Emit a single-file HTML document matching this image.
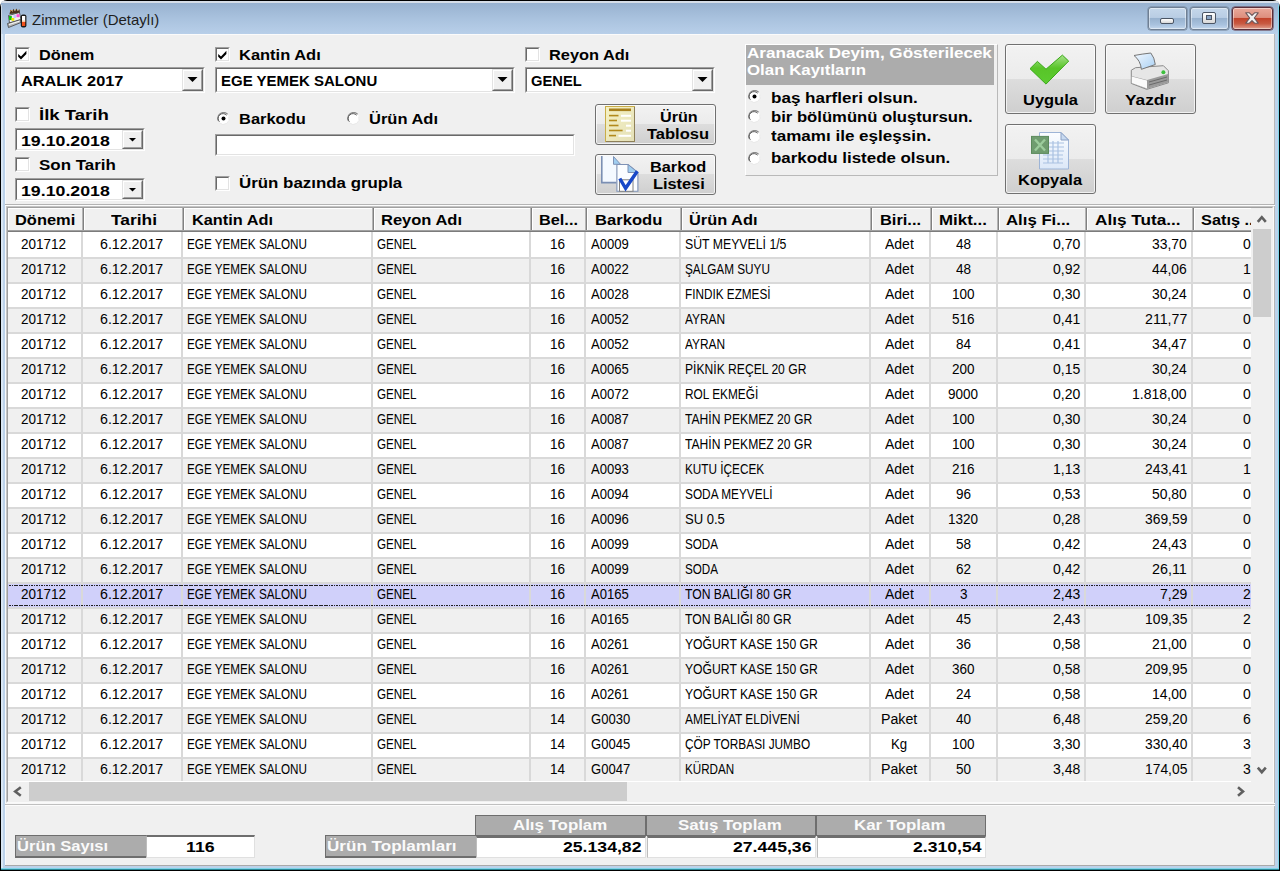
<!DOCTYPE html><html><head><meta charset="utf-8"><style>
html,body{margin:0;padding:0;background:#fff}
body{width:1280px;height:871px;position:relative;overflow:hidden;font-family:"Liberation Sans",sans-serif}
div,svg{position:absolute}
.t{white-space:pre;line-height:1;transform-origin:0 0}
.b{font-weight:bold}
</style></head><body>
<div style="left:0px;top:0px;width:1280px;height:871px;background:#000;border-radius:7px 7px 0 0"></div>
<div style="left:1px;top:1px;width:1278px;height:869px;background:#bcd2ea;border-radius:6px 6px 0 0"></div>
<div style="left:1px;top:1px;width:1278px;height:2px;background:#d6dee8;border-radius:6px 6px 0 0"></div>
<div style="left:1px;top:3px;width:1278px;height:31px;background:linear-gradient(#98b2d0,#a9c2de 50%,#b8cfe9)"></div>
<div style="left:1px;top:34px;width:2px;height:836px;background:#d9e6f3"></div>
<div style="left:1px;top:868px;width:1278px;height:1px;background:#7fd6ea"></div>
<div style="left:1px;top:869px;width:1278px;height:1px;background:#2c8796"></div>
<div style="left:1278px;top:5px;width:1px;height:864px;background:#7fd6ea"></div>
<div style="left:1px;top:5px;width:1px;height:29px;background:#cdd8e4"></div>
<div style="left:5px;top:34px;width:1270px;height:832px;background:#f0f0f0"></div>
<div style="left:5px;top:34px;width:1270px;height:1px;background:#fbfbfb"></div>
<div style="left:5px;top:34px;width:1px;height:832px;background:#f6f9fc"></div>
<div style="left:5px;top:865px;width:1270px;height:1px;background:#a9a9a9"></div>
<div style="left:1274px;top:34px;width:1px;height:832px;background:#b8b8b8"></div>
<svg style="left:6px;top:7px" width="24" height="24" viewBox="6 7 24 24">
<path d="M9.5 14 L10.5 9.5 L12 12 L13.5 8.8 L15 11.5 L16.5 8.6 L17.8 11.2 L19.5 9.2 L20 13 Z" fill="#4a3218"/>
<path d="M10.5 11.5 L11.5 10 L12.5 11.5 M14.5 10.5 L15.5 9.5 M17.5 10.5 L18.5 9.8" stroke="#e0a050" stroke-width="1"/>
<path d="M8.5 15.5 L19.5 12.5 L21 20 L9.5 23 Z" fill="#f0f0f0" stroke="#3a3a3a" stroke-width="0.8"/>
<rect x="9" y="16" width="2.8" height="4" fill="#10c010"/>
<rect x="11.5" y="18" width="2.8" height="2.8" fill="#f0e800"/>
<rect x="13.5" y="15" width="2.6" height="3" fill="#c8c8ff"/>
<rect x="16.5" y="14.2" width="3" height="3" fill="#ff50d0"/>
<path d="M7.5 23.5 L20.5 19.5 L21 22.5 L8.5 27.5 Z" fill="#b8b8b8" stroke="#404040" stroke-width="0.8"/>
<path d="M9 24.5 L19.5 21.2" stroke="#f8f8f8" stroke-width="1"/>
<rect x="20.8" y="14.5" width="5.6" height="13" rx="2" fill="#1a1a1a"/>
<rect x="22" y="16" width="3.2" height="5.5" fill="#fff"/>
<rect x="22" y="21.5" width="3.2" height="4.5" fill="#f0501c"/>
<rect x="22" y="20.5" width="3.2" height="1.5" fill="#f8c8a8"/>
</svg>
<div class="t" style="left:32.30px;top:12.30px;font-size:15px;transform:scaleX(0.9984);color:#1e1e1e;">Zimmetler (Detaylı)</div>
<div style="left:1148px;top:7px;width:39px;height:23px;box-sizing:border-box;border:1px solid #6f7f93;border-radius:3px;background:linear-gradient(#c5d7ea,#b9cde4 45%,#98b2cf 50%,#a9c2de 80%,#c4d8ee);box-shadow:inset 0 0 0 1px rgba(255,255,255,0.45),0 0 0 0.5px #6f7f93"></div>
<div style="left:1190px;top:7px;width:39px;height:23px;box-sizing:border-box;border:1px solid #6f7f93;border-radius:3px;background:linear-gradient(#c5d7ea,#b9cde4 45%,#98b2cf 50%,#a9c2de 80%,#c4d8ee);box-shadow:inset 0 0 0 1px rgba(255,255,255,0.45),0 0 0 0.5px #6f7f93"></div>
<div style="left:1232px;top:7px;width:41px;height:23px;box-sizing:border-box;border:1px solid #5b2f3a;border-radius:3px;background:linear-gradient(#eaa89a,#dd8f7e 45%,#c2432b 50%,#c85a42 75%,#e0a090);box-shadow:inset 0 0 0 1px rgba(255,255,255,0.45),0 0 0 0.5px #5b2f3a"></div>
<div style="left:1160px;top:18px;width:14px;height:6px;box-sizing:border-box;border:1px solid #4b5564;border-radius:2px;background:linear-gradient(#fff,#d8d8d8)"></div>
<div style="left:1202px;top:12px;width:14px;height:12px;box-sizing:border-box;border:1px solid #4b5564;border-radius:2px;background:linear-gradient(#fff,#d8d8d8)"></div>
<div style="left:1206px;top:15px;width:6px;height:5px;box-sizing:border-box;border:1px solid #4b5564;background:#8aa4c4"></div>
<svg style="left:1242px;top:10px" width="22" height="18" viewBox="0 0 22 18">
<path d="M3.8 2.8 L7.4 2.8 L10 5.4 L12.6 2.8 L16.2 2.8 L12.3 8 L16.2 13.2 L12.6 13.2 L10 10.6 L7.4 13.2 L3.8 13.2 L7.7 8 Z" fill="#f0f0f0" stroke="#6b5558" stroke-width="1.1" stroke-linejoin="round"/>
</svg>
<div style="left:15px;top:47px;width:15px;height:15px;box-sizing:border-box;background:#fff;border-style:solid;border-width:1px;border-color:#a0a0a0 #fff #fff #a0a0a0"></div>
<div style="left:16px;top:48px;width:13px;height:13px;box-sizing:border-box;border-style:solid;border-width:1px;border-color:#696969 #e3e3e3 #e3e3e3 #696969"></div>
<svg style="left:15px;top:47px" width="15" height="15" viewBox="0 0 15 15"><path d="M3.2 7 L6 9.6 L11.4 3.8 L11.4 6.9 L6 12.4 L3.2 9.8 Z" fill="#000"/></svg>
<div class="t b" style="left:39.20px;top:48.15px;font-size:14px;transform:scaleX(1.1667);color:#000;">Dönem</div>
<div style="left:215px;top:47px;width:15px;height:15px;box-sizing:border-box;background:#fff;border-style:solid;border-width:1px;border-color:#a0a0a0 #fff #fff #a0a0a0"></div>
<div style="left:216px;top:48px;width:13px;height:13px;box-sizing:border-box;border-style:solid;border-width:1px;border-color:#696969 #e3e3e3 #e3e3e3 #696969"></div>
<svg style="left:215px;top:47px" width="15" height="15" viewBox="0 0 15 15"><path d="M3.2 7 L6 9.6 L11.4 3.8 L11.4 6.9 L6 12.4 L3.2 9.8 Z" fill="#000"/></svg>
<div class="t b" style="left:239.00px;top:48.15px;font-size:14px;transform:scaleX(1.1763);color:#000;">Kantin Adı</div>
<div style="left:525px;top:47px;width:15px;height:15px;box-sizing:border-box;background:#fff;border-style:solid;border-width:1px;border-color:#a0a0a0 #fff #fff #a0a0a0"></div>
<div style="left:526px;top:48px;width:13px;height:13px;box-sizing:border-box;border-style:solid;border-width:1px;border-color:#696969 #e3e3e3 #e3e3e3 #696969"></div>
<div class="t b" style="left:549.00px;top:48.15px;font-size:14px;transform:scaleX(1.1703);color:#000;">Reyon Adı</div>
<div style="left:15px;top:67px;width:190px;height:26px;box-sizing:border-box;background:#fff;border-style:solid;border-width:1px;border-color:#a0a0a0 #fff #fff #a0a0a0"></div>
<div style="left:16px;top:68px;width:188px;height:24px;box-sizing:border-box;border-style:solid;border-width:1px;border-color:#696969 #e3e3e3 #e3e3e3 #696969"></div>
<div style="left:182px;top:69px;width:21px;height:22px;box-sizing:border-box;background:#f0f0f0;border-style:solid;border-width:1px;border-color:#e3e3e3 #696969 #696969 #e3e3e3"></div>
<div style="left:183px;top:70px;width:19px;height:20px;box-sizing:border-box;border-style:solid;border-width:1px;border-color:#fff #a0a0a0 #a0a0a0 #fff"></div>
<svg style="left:182px;top:69px" width="21" height="22"><path d="M5.5 8.0 L15.5 8.0 L10.5 13.0 Z" fill="#000"/></svg>
<div class="t b" style="left:20.50px;top:74.15px;font-size:14px;transform:scaleX(1.1638);color:#000;">ARALIK 2017</div>
<div style="left:215px;top:67px;width:300px;height:26px;box-sizing:border-box;background:#fff;border-style:solid;border-width:1px;border-color:#a0a0a0 #fff #fff #a0a0a0"></div>
<div style="left:216px;top:68px;width:298px;height:24px;box-sizing:border-box;border-style:solid;border-width:1px;border-color:#696969 #e3e3e3 #e3e3e3 #696969"></div>
<div style="left:492px;top:69px;width:21px;height:22px;box-sizing:border-box;background:#f0f0f0;border-style:solid;border-width:1px;border-color:#e3e3e3 #696969 #696969 #e3e3e3"></div>
<div style="left:493px;top:70px;width:19px;height:20px;box-sizing:border-box;border-style:solid;border-width:1px;border-color:#fff #a0a0a0 #a0a0a0 #fff"></div>
<svg style="left:492px;top:69px" width="21" height="22"><path d="M5.5 8.0 L15.5 8.0 L10.5 13.0 Z" fill="#000"/></svg>
<div class="t b" style="left:220.75px;top:74.15px;font-size:14px;transform:scaleX(1.0702);color:#000;">EGE YEMEK SALONU</div>
<div style="left:525px;top:67px;width:190px;height:26px;box-sizing:border-box;background:#fff;border-style:solid;border-width:1px;border-color:#a0a0a0 #fff #fff #a0a0a0"></div>
<div style="left:526px;top:68px;width:188px;height:24px;box-sizing:border-box;border-style:solid;border-width:1px;border-color:#696969 #e3e3e3 #e3e3e3 #696969"></div>
<div style="left:692px;top:69px;width:21px;height:22px;box-sizing:border-box;background:#f0f0f0;border-style:solid;border-width:1px;border-color:#e3e3e3 #696969 #696969 #e3e3e3"></div>
<div style="left:693px;top:70px;width:19px;height:20px;box-sizing:border-box;border-style:solid;border-width:1px;border-color:#fff #a0a0a0 #a0a0a0 #fff"></div>
<svg style="left:692px;top:69px" width="21" height="22"><path d="M5.5 8.0 L15.5 8.0 L10.5 13.0 Z" fill="#000"/></svg>
<div class="t b" style="left:530.60px;top:74.15px;font-size:14px;transform:scaleX(1.0508);color:#000;">GENEL</div>
<div style="left:15px;top:107px;width:15px;height:15px;box-sizing:border-box;background:#fff;border-style:solid;border-width:1px;border-color:#a0a0a0 #fff #fff #a0a0a0"></div>
<div style="left:16px;top:108px;width:13px;height:13px;box-sizing:border-box;border-style:solid;border-width:1px;border-color:#696969 #e3e3e3 #e3e3e3 #696969"></div>
<div class="t b" style="left:38.75px;top:108.15px;font-size:14px;transform:scaleX(1.3260);color:#000;">İlk Tarih</div>
<div style="left:15px;top:128px;width:130px;height:23px;box-sizing:border-box;background:#fff;border-style:solid;border-width:1px;border-color:#a0a0a0 #fff #fff #a0a0a0"></div>
<div style="left:16px;top:129px;width:128px;height:21px;box-sizing:border-box;border-style:solid;border-width:1px;border-color:#696969 #e3e3e3 #e3e3e3 #696969"></div>
<div style="left:122px;top:130px;width:21px;height:19px;box-sizing:border-box;background:#f0f0f0;border-style:solid;border-width:1px;border-color:#e3e3e3 #696969 #696969 #e3e3e3"></div>
<div style="left:123px;top:131px;width:19px;height:17px;box-sizing:border-box;border-style:solid;border-width:1px;border-color:#fff #a0a0a0 #a0a0a0 #fff"></div>
<svg style="left:122px;top:130px" width="21" height="19"><path d="M7.0 8.0 L14.0 8.0 L10.5 11.5 Z" fill="#000"/></svg>
<div class="t b" style="left:20.60px;top:134.15px;font-size:14px;transform:scaleX(1.2668);color:#000;">19.10.2018</div>
<div style="left:15px;top:157px;width:15px;height:15px;box-sizing:border-box;background:#fff;border-style:solid;border-width:1px;border-color:#a0a0a0 #fff #fff #a0a0a0"></div>
<div style="left:16px;top:158px;width:13px;height:13px;box-sizing:border-box;border-style:solid;border-width:1px;border-color:#696969 #e3e3e3 #e3e3e3 #696969"></div>
<div class="t b" style="left:38.75px;top:158.15px;font-size:14px;transform:scaleX(1.2102);color:#000;">Son Tarih</div>
<div style="left:15px;top:178px;width:130px;height:23px;box-sizing:border-box;background:#fff;border-style:solid;border-width:1px;border-color:#a0a0a0 #fff #fff #a0a0a0"></div>
<div style="left:16px;top:179px;width:128px;height:21px;box-sizing:border-box;border-style:solid;border-width:1px;border-color:#696969 #e3e3e3 #e3e3e3 #696969"></div>
<div style="left:122px;top:180px;width:21px;height:19px;box-sizing:border-box;background:#f0f0f0;border-style:solid;border-width:1px;border-color:#e3e3e3 #696969 #696969 #e3e3e3"></div>
<div style="left:123px;top:181px;width:19px;height:17px;box-sizing:border-box;border-style:solid;border-width:1px;border-color:#fff #a0a0a0 #a0a0a0 #fff"></div>
<svg style="left:122px;top:180px" width="21" height="19"><path d="M7.0 8.0 L14.0 8.0 L10.5 11.5 Z" fill="#000"/></svg>
<div class="t b" style="left:20.60px;top:184.15px;font-size:14px;transform:scaleX(1.2668);color:#000;">19.10.2018</div>
<svg style="left:217px;top:112px" width="13" height="13" viewBox="0 0 13 13">
<circle cx="6.5" cy="6.5" r="5.8" fill="#fff"/>
<path d="M1.2 8.5 A5.8 5.8 0 0 1 10.6 2.2" fill="none" stroke="#8a8a8a" stroke-width="1.2"/>
<path d="M2.4 9.8 A4.6 4.6 0 0 1 9.6 3.2" fill="none" stroke="#5a5a5a" stroke-width="1"/>
<path d="M11.8 4.5 A5.8 5.8 0 0 1 2.4 10.8" fill="none" stroke="#e8e8e8" stroke-width="1"/>
<circle cx="6.5" cy="6.5" r="2" fill="#000"/>
</svg>
<div class="t b" style="left:239.00px;top:112.15px;font-size:14px;transform:scaleX(1.1761);color:#000;">Barkodu</div>
<svg style="left:347px;top:112px" width="13" height="13" viewBox="0 0 13 13">
<circle cx="6.5" cy="6.5" r="5.8" fill="#fff"/>
<path d="M1.2 8.5 A5.8 5.8 0 0 1 10.6 2.2" fill="none" stroke="#8a8a8a" stroke-width="1.2"/>
<path d="M2.4 9.8 A4.6 4.6 0 0 1 9.6 3.2" fill="none" stroke="#5a5a5a" stroke-width="1"/>
<path d="M11.8 4.5 A5.8 5.8 0 0 1 2.4 10.8" fill="none" stroke="#e8e8e8" stroke-width="1"/>

</svg>
<div class="t b" style="left:369.40px;top:112.15px;font-size:14px;transform:scaleX(1.1775);color:#000;">Ürün Adı</div>
<div style="left:215px;top:134px;width:360px;height:22px;box-sizing:border-box;background:#fff;border-style:solid;border-width:1px;border-color:#a0a0a0 #fff #fff #a0a0a0"></div>
<div style="left:216px;top:135px;width:358px;height:20px;box-sizing:border-box;border-style:solid;border-width:1px;border-color:#696969 #e3e3e3 #e3e3e3 #696969"></div>
<div style="left:215px;top:176px;width:15px;height:15px;box-sizing:border-box;background:#fff;border-style:solid;border-width:1px;border-color:#a0a0a0 #fff #fff #a0a0a0"></div>
<div style="left:216px;top:177px;width:13px;height:13px;box-sizing:border-box;border-style:solid;border-width:1px;border-color:#696969 #e3e3e3 #e3e3e3 #696969"></div>
<div class="t b" style="left:239.40px;top:176.15px;font-size:14px;transform:scaleX(1.2061);color:#000;">Ürün bazında grupla</div>
<div style="left:595px;top:104px;width:121px;height:41px;box-sizing:border-box;border:1px solid #707070;border-radius:3px;background:linear-gradient(#f2f2f2,#ebebeb 50%,#dddddd 50%,#cfcfcf);box-shadow:inset 0 0 0 1px rgba(255,255,255,0.7)"></div>
<div class="t b" style="left:659.50px;top:110.15px;font-size:14px;transform:scaleX(1.1560);color:#000;">Ürün</div>
<div class="t b" style="left:647.40px;top:126.65px;font-size:14px;transform:scaleX(1.1787);color:#000;">Tablosu</div>
<div style="left:595px;top:154px;width:121px;height:41px;box-sizing:border-box;border:1px solid #707070;border-radius:3px;background:linear-gradient(#f2f2f2,#ebebeb 50%,#dddddd 50%,#cfcfcf);box-shadow:inset 0 0 0 1px rgba(255,255,255,0.7)"></div>
<div class="t b" style="left:650.30px;top:160.15px;font-size:14px;transform:scaleX(1.1660);color:#000;">Barkod</div>
<div class="t b" style="left:653.00px;top:176.65px;font-size:14px;transform:scaleX(1.1667);color:#000;">Listesi</div>
<div style="left:745px;top:44px;width:253px;height:132px;box-sizing:border-box;border-style:solid;border-width:1px;border-color:#fff #b9b9b9 #b9b9b9 #fff"></div>
<div style="left:746px;top:45px;width:248px;height:40px;background:#acacac"></div>
<div class="t b" style="left:747.00px;top:46.15px;font-size:14px;transform:scaleX(1.2196);color:#fff;">Aranacak Deyim, Gösterilecek</div>
<div class="t b" style="left:747.00px;top:63.15px;font-size:14px;transform:scaleX(1.2045);color:#fff;">Olan Kayıtların</div>
<svg style="left:748px;top:90px" width="13" height="13" viewBox="0 0 13 13">
<circle cx="6.5" cy="6.5" r="5.8" fill="#fff"/>
<path d="M1.2 8.5 A5.8 5.8 0 0 1 10.6 2.2" fill="none" stroke="#8a8a8a" stroke-width="1.2"/>
<path d="M2.4 9.8 A4.6 4.6 0 0 1 9.6 3.2" fill="none" stroke="#5a5a5a" stroke-width="1"/>
<path d="M11.8 4.5 A5.8 5.8 0 0 1 2.4 10.8" fill="none" stroke="#e8e8e8" stroke-width="1"/>
<circle cx="6.5" cy="6.5" r="2" fill="#000"/>
</svg>
<div class="t b" style="left:770.90px;top:91.15px;font-size:14px;transform:scaleX(1.2172);color:#000;">baş harfleri olsun.</div>
<svg style="left:748px;top:110px" width="13" height="13" viewBox="0 0 13 13">
<circle cx="6.5" cy="6.5" r="5.8" fill="#fff"/>
<path d="M1.2 8.5 A5.8 5.8 0 0 1 10.6 2.2" fill="none" stroke="#8a8a8a" stroke-width="1.2"/>
<path d="M2.4 9.8 A4.6 4.6 0 0 1 9.6 3.2" fill="none" stroke="#5a5a5a" stroke-width="1"/>
<path d="M11.8 4.5 A5.8 5.8 0 0 1 2.4 10.8" fill="none" stroke="#e8e8e8" stroke-width="1"/>

</svg>
<div class="t b" style="left:770.90px;top:110.15px;font-size:14px;transform:scaleX(1.1900);color:#000;">bir bölümünü oluştursun.</div>
<svg style="left:748px;top:130px" width="13" height="13" viewBox="0 0 13 13">
<circle cx="6.5" cy="6.5" r="5.8" fill="#fff"/>
<path d="M1.2 8.5 A5.8 5.8 0 0 1 10.6 2.2" fill="none" stroke="#8a8a8a" stroke-width="1.2"/>
<path d="M2.4 9.8 A4.6 4.6 0 0 1 9.6 3.2" fill="none" stroke="#5a5a5a" stroke-width="1"/>
<path d="M11.8 4.5 A5.8 5.8 0 0 1 2.4 10.8" fill="none" stroke="#e8e8e8" stroke-width="1"/>

</svg>
<div class="t b" style="left:770.90px;top:129.15px;font-size:14px;transform:scaleX(1.2175);color:#000;">tamamı ile eşleşsin.</div>
<svg style="left:748px;top:152px" width="13" height="13" viewBox="0 0 13 13">
<circle cx="6.5" cy="6.5" r="5.8" fill="#fff"/>
<path d="M1.2 8.5 A5.8 5.8 0 0 1 10.6 2.2" fill="none" stroke="#8a8a8a" stroke-width="1.2"/>
<path d="M2.4 9.8 A4.6 4.6 0 0 1 9.6 3.2" fill="none" stroke="#5a5a5a" stroke-width="1"/>
<path d="M11.8 4.5 A5.8 5.8 0 0 1 2.4 10.8" fill="none" stroke="#e8e8e8" stroke-width="1"/>

</svg>
<div class="t b" style="left:770.90px;top:151.15px;font-size:14px;transform:scaleX(1.2066);color:#000;">barkodu listede olsun.</div>
<div style="left:1005px;top:44px;width:91px;height:70px;box-sizing:border-box;border:1px solid #707070;border-radius:3px;background:linear-gradient(#f2f2f2,#ebebeb 50%,#dddddd 50%,#cfcfcf);box-shadow:inset 0 0 0 1px rgba(255,255,255,0.7)"></div>
<div class="t b" style="left:1023.00px;top:92.65px;font-size:14px;transform:scaleX(1.1752);color:#000;">Uygula</div>
<div style="left:1105px;top:44px;width:91px;height:70px;box-sizing:border-box;border:1px solid #707070;border-radius:3px;background:linear-gradient(#f2f2f2,#ebebeb 50%,#dddddd 50%,#cfcfcf);box-shadow:inset 0 0 0 1px rgba(255,255,255,0.7)"></div>
<div class="t b" style="left:1125.00px;top:92.65px;font-size:14px;transform:scaleX(1.2330);color:#000;">Yazdır</div>
<div style="left:1005px;top:124px;width:91px;height:70px;box-sizing:border-box;border:1px solid #707070;border-radius:3px;background:linear-gradient(#f2f2f2,#ebebeb 50%,#dddddd 50%,#cfcfcf);box-shadow:inset 0 0 0 1px rgba(255,255,255,0.7)"></div>
<div class="t b" style="left:1017.70px;top:172.65px;font-size:14px;transform:scaleX(1.1758);color:#000;">Kopyala</div>
<svg style="left:604px;top:105px" width="32" height="38" viewBox="604 105 32 38">
<defs><linearGradient id="ny" x1="0" y1="0" x2="1" y2="1"><stop offset="0" stop-color="#f6f2c4"/><stop offset="1" stop-color="#e4e0b8"/></linearGradient></defs>
<rect x="605.5" y="106.5" width="29" height="35" fill="url(#ny)" stroke="#c9ad48" stroke-width="1"/>
<path d="M634.5 107 V141.5 H606" fill="none" stroke="#8d7f58" stroke-width="1"/>
<rect x="609" y="108.5" width="22" height="2.6" fill="#a8801c"/>
<g stroke="#b28a1c" stroke-width="1.6">
<path d="M609 115.6 H618.5"/><path d="M609 120.5 H617"/><path d="M609 125.5 H618.5"/><path d="M609 130.5 H622.6"/><path d="M609 135.6 H616"/></g>
<g fill="#ffffff"><rect x="621" y="114.8" width="10" height="2"/><rect x="621" y="119.7" width="10" height="2"/><rect x="626" y="124.7" width="5" height="2"/><rect x="626" y="129.7" width="5" height="2"/><rect x="618.5" y="134.8" width="12.5" height="2"/></g>
</svg>
<svg style="left:600px;top:155px" width="40" height="38" viewBox="600 155 40 38">
<path d="M601.5 156 V182.8 H616.5 V164.5 H620.5 L613.5 156.5 Z" fill="#f4f9ff" stroke="none"/>
<path d="M601.8 156 V182.6 H616.5" fill="none" stroke="#7b8fb3" stroke-width="1.6"/>
<path d="M613.5 156.5 L613.5 164.3 L620.5 164.3 Z" fill="#9fcdf0" stroke="#7f92b5" stroke-width="1"/>
<path d="M616.9 164.5 H628 L637.9 172.5 V191.3 H616.9 Z" fill="#fbfdff" stroke="#7f92b5" stroke-width="1.1"/>
<path d="M628 164.5 V172.5 H637.9 Z" fill="#9fcdf0" stroke="#7f92b5" stroke-width="1"/>
<rect x="619.5" y="179.8" width="13.5" height="11.5" fill="#fff" stroke="#808080" stroke-width="1"/>
<path d="M619.8 178.5 L625.6 188.3 L637.3 171.2" fill="none" stroke="#1848c8" stroke-width="3.4" stroke-linejoin="miter" stroke-linecap="butt"/>
</svg>
<svg style="left:1028px;top:53px" width="44" height="34" viewBox="1028 53 44 34">
<defs><linearGradient id="gc" x1="0" y1="0" x2="0" y2="1"><stop offset="0" stop-color="#a6e28a"/><stop offset="0.45" stop-color="#58c428"/><stop offset="1" stop-color="#5ccc30"/></linearGradient></defs>
<path d="M1030 68.7 L1037.4 61.4 L1046 69.2 L1062.4 55.1 L1068.7 61.1 L1046 84.1 Z" fill="url(#gc)" stroke="#3aa818" stroke-width="1" stroke-linejoin="round"/>
</svg>
<svg style="left:1129px;top:51px" width="42" height="40" viewBox="1129 51 42 40">
<defs><linearGradient id="pp" x1="0" y1="0" x2="1" y2="1"><stop offset="0" stop-color="#f4f9ff"/><stop offset="1" stop-color="#a8d0f4"/></linearGradient></defs>
<path d="M1131.3 70.2 L1135.6 67.7 L1163.4 65.7 L1168.4 70.7 L1168.4 82.8 L1146.7 89.4 L1131.3 83.4 Z" fill="#e6e6e6" stroke="#8a8a8a" stroke-width="1"/>
<path d="M1131.5 76 L1147 80 L1168 74 L1168 82.6 L1146.7 89 L1131.5 83.2 Z" fill="#9a9a9a"/>
<path d="M1131.8 76.5 L1147 80.5 L1147 88.6 L1131.8 83 Z" fill="#fafafa"/>
<path d="M1149 82 L1167 77 M1149 85 L1167 80" stroke="#6a6a6a" stroke-width="1"/>
<path d="M1134 55.5 Q1142 54 1150.8 53 Q1154.5 57.5 1155.3 64.5 L1141.4 69.3 Q1140.5 60.5 1134 55.5 Z" fill="url(#pp)" stroke="#767676" stroke-width="1"/>
<circle cx="1163.4" cy="72.2" r="2" fill="#3cc03c"/>
</svg>
<svg style="left:1029px;top:131px" width="42" height="40" viewBox="1029 131 42 40">
<defs><linearGradient id="xp" x1="0" y1="0" x2="0" y2="1"><stop offset="0" stop-color="#fbfdff"/><stop offset="1" stop-color="#dce8f8"/></linearGradient></defs>
<path d="M1039.5 132.5 H1061 L1068.5 140 V169 H1039.5 Z" fill="url(#xp)" stroke="#9db4d6" stroke-width="1"/>
<path d="M1061 132.5 V140 H1068.5 Z" fill="#c8daf0" stroke="#8aa0c4" stroke-width="1"/>
<g stroke="#a9c1e2" stroke-width="1.2" fill="none">
<path d="M1043 143 H1064 M1043 147 H1064 M1043 151 H1064 M1043 155 H1063 M1043 159 H1063 M1043 163 H1063"/>
<path d="M1048 141 V163 M1053 141 V163 M1058 141 V163"/></g>
<rect x="1031.5" y="136.4" width="17" height="17" fill="#6f9c6f" stroke="#5b8a5b" stroke-width="1"/>
<path d="M1035 139.5 L1045 150.5 M1045 139.5 L1035 150.5" stroke="#9ccc9c" stroke-width="2.4"/>
</svg>
<div style="left:5px;top:204px;width:1270px;height:1px;background:#b4b4b4"></div>
<div style="left:5px;top:205px;width:1270px;height:1px;background:#fcfcfc"></div>
<div style="left:6px;top:206px;width:1268px;height:597px;box-sizing:border-box;background:#fff;border-style:solid;border-width:1px;border-color:#c4c4c4 #fafafa #fafafa #c4c4c4"></div>
<div style="left:7px;top:207px;width:1266px;height:595px;box-sizing:border-box;border-style:solid;border-width:1px;border-color:#a0a0a0 #f0f0f0 #f0f0f0 #a0a0a0"></div>
<div style="left:8px;top:208px;width:1243px;height:573px;overflow:hidden">
<div style="left:0px;top:0px;width:76px;height:24px;box-sizing:border-box;background:#f0f0f0;border-style:solid;border-width:1px 1px 0 1px;border-color:#fff #a0a0a0 #fff #fff"></div>
<div style="left:75px;top:0px;width:1px;height:22px;background:#808080"></div>
<div style="left:74px;top:0px;width:1px;height:22px;background:#b4b4b4"></div>
<div style="left:76px;top:0px;width:100px;height:24px;box-sizing:border-box;background:#f0f0f0;border-style:solid;border-width:1px 1px 0 1px;border-color:#fff #a0a0a0 #fff #fff"></div>
<div style="left:175px;top:0px;width:1px;height:22px;background:#808080"></div>
<div style="left:174px;top:0px;width:1px;height:22px;background:#b4b4b4"></div>
<div style="left:176px;top:0px;width:190px;height:24px;box-sizing:border-box;background:#f0f0f0;border-style:solid;border-width:1px 1px 0 1px;border-color:#fff #a0a0a0 #fff #fff"></div>
<div style="left:365px;top:0px;width:1px;height:22px;background:#808080"></div>
<div style="left:364px;top:0px;width:1px;height:22px;background:#b4b4b4"></div>
<div style="left:366px;top:0px;width:158px;height:24px;box-sizing:border-box;background:#f0f0f0;border-style:solid;border-width:1px 1px 0 1px;border-color:#fff #a0a0a0 #fff #fff"></div>
<div style="left:523px;top:0px;width:1px;height:22px;background:#808080"></div>
<div style="left:522px;top:0px;width:1px;height:22px;background:#b4b4b4"></div>
<div style="left:524px;top:0px;width:55px;height:24px;box-sizing:border-box;background:#f0f0f0;border-style:solid;border-width:1px 1px 0 1px;border-color:#fff #a0a0a0 #fff #fff"></div>
<div style="left:578px;top:0px;width:1px;height:22px;background:#808080"></div>
<div style="left:577px;top:0px;width:1px;height:22px;background:#b4b4b4"></div>
<div style="left:579px;top:0px;width:95px;height:24px;box-sizing:border-box;background:#f0f0f0;border-style:solid;border-width:1px 1px 0 1px;border-color:#fff #a0a0a0 #fff #fff"></div>
<div style="left:673px;top:0px;width:1px;height:22px;background:#808080"></div>
<div style="left:672px;top:0px;width:1px;height:22px;background:#b4b4b4"></div>
<div style="left:674px;top:0px;width:190px;height:24px;box-sizing:border-box;background:#f0f0f0;border-style:solid;border-width:1px 1px 0 1px;border-color:#fff #a0a0a0 #fff #fff"></div>
<div style="left:863px;top:0px;width:1px;height:22px;background:#808080"></div>
<div style="left:862px;top:0px;width:1px;height:22px;background:#b4b4b4"></div>
<div style="left:864px;top:0px;width:60px;height:24px;box-sizing:border-box;background:#f0f0f0;border-style:solid;border-width:1px 1px 0 1px;border-color:#fff #a0a0a0 #fff #fff"></div>
<div style="left:923px;top:0px;width:1px;height:22px;background:#808080"></div>
<div style="left:922px;top:0px;width:1px;height:22px;background:#b4b4b4"></div>
<div style="left:924px;top:0px;width:67px;height:24px;box-sizing:border-box;background:#f0f0f0;border-style:solid;border-width:1px 1px 0 1px;border-color:#fff #a0a0a0 #fff #fff"></div>
<div style="left:990px;top:0px;width:1px;height:22px;background:#808080"></div>
<div style="left:989px;top:0px;width:1px;height:22px;background:#b4b4b4"></div>
<div style="left:991px;top:0px;width:88px;height:24px;box-sizing:border-box;background:#f0f0f0;border-style:solid;border-width:1px 1px 0 1px;border-color:#fff #a0a0a0 #fff #fff"></div>
<div style="left:1078px;top:0px;width:1px;height:22px;background:#808080"></div>
<div style="left:1077px;top:0px;width:1px;height:22px;background:#b4b4b4"></div>
<div style="left:1079px;top:0px;width:107px;height:24px;box-sizing:border-box;background:#f0f0f0;border-style:solid;border-width:1px 1px 0 1px;border-color:#fff #a0a0a0 #fff #fff"></div>
<div style="left:1185px;top:0px;width:1px;height:22px;background:#808080"></div>
<div style="left:1184px;top:0px;width:1px;height:22px;background:#b4b4b4"></div>
<div style="left:1186px;top:0px;width:108px;height:24px;box-sizing:border-box;background:#f0f0f0;border-style:solid;border-width:1px 1px 0 1px;border-color:#fff #a0a0a0 #fff #fff"></div>
<div style="left:1293px;top:0px;width:1px;height:22px;background:#808080"></div>
<div style="left:1292px;top:0px;width:1px;height:22px;background:#b4b4b4"></div>
<div style="left:0px;top:22px;width:1300px;height:1px;background:#a0a0a0"></div>
<div style="left:0px;top:23px;width:1300px;height:1px;background:#7c7c7c"></div>
<div class="t b" style="left:6.80px;top:5.15px;font-size:14px;transform:scaleX(1.1745);color:#000;">Dönemi</div>
<div class="t b" style="left:103.00px;top:5.15px;font-size:14px;transform:scaleX(1.2399);color:#000;">Tarihi</div>
<div class="t b" style="left:184.00px;top:5.15px;font-size:14px;transform:scaleX(1.1655);color:#000;">Kantin Adı</div>
<div class="t b" style="left:373.25px;top:5.15px;font-size:14px;transform:scaleX(1.1790);color:#000;">Reyon Adı</div>
<div class="t b" style="left:531.30px;top:5.15px;font-size:14px;transform:scaleX(1.1642);color:#000;">Bel...</div>
<div class="t b" style="left:587.00px;top:5.15px;font-size:14px;transform:scaleX(1.1849);color:#000;">Barkodu</div>
<div class="t b" style="left:681.00px;top:5.15px;font-size:14px;transform:scaleX(1.1689);color:#000;">Ürün Adı</div>
<div class="t b" style="left:871.50px;top:5.15px;font-size:14px;transform:scaleX(1.1714);color:#000;">Biri...</div>
<div class="t b" style="left:931.40px;top:5.15px;font-size:14px;transform:scaleX(1.2065);color:#000;">Mikt...</div>
<div class="t b" style="left:998.25px;top:5.15px;font-size:14px;transform:scaleX(1.1965);color:#000;">Alış Fi...</div>
<div class="t b" style="left:1087.00px;top:5.15px;font-size:14px;transform:scaleX(1.2267);color:#000;">Alış Tuta...</div>
<div class="t b" style="left:1193.25px;top:5.15px;font-size:14px;transform:scaleX(1.1648);color:#000;">Satış ...</div>
<div style="left:0px;top:24px;width:1300px;height:25px;background:#fff"></div>
<div class="t" style="left:12.70px;top:29.15px;font-size:14px;transform:scaleX(0.9636);color:#000;">201712</div>
<div class="t" style="left:92.47px;top:29.15px;font-size:14px;transform:scaleX(1.0152);color:#000;">6.12.2017</div>
<div class="t" style="left:179.00px;top:29.15px;font-size:14px;transform:scaleX(0.8351);color:#000;">EGE YEMEK SALONU</div>
<div class="t" style="left:368.70px;top:29.15px;font-size:14px;transform:scaleX(0.8331);color:#000;">GENEL</div>
<div class="t" style="left:541.97px;top:29.15px;font-size:14px;transform:scaleX(0.9659);color:#000;">16</div>
<div class="t" style="left:582.80px;top:29.15px;font-size:14px;transform:scaleX(0.9353);color:#000;">A0009</div>
<div class="t" style="left:676.60px;top:29.15px;font-size:14px;transform:scaleX(0.8770);color:#000;">SÜT MEYVELİ 1/5</div>
<div class="t" style="left:877.02px;top:29.15px;font-size:14px;transform:scaleX(0.9986);color:#000;">Adet</div>
<div class="t" style="left:947.97px;top:29.15px;font-size:14px;transform:scaleX(0.9659);color:#000;">48</div>
<div class="t" style="left:1045.26px;top:29.15px;font-size:14px;transform:scaleX(1.0013);color:#000;">0,70</div>
<div class="t" style="left:1144.23px;top:29.15px;font-size:14px;transform:scaleX(0.9934);color:#000;">33,70</div>
<div class="t" style="left:1235.30px;top:29.15px;font-size:14px;transform:scaleX(1.0013);color:#000;">0,85</div>
<div style="left:0px;top:50px;width:1300px;height:24px;background:#f0f0f0"></div>
<div class="t" style="left:12.70px;top:54.15px;font-size:14px;transform:scaleX(0.9636);color:#000;">201712</div>
<div class="t" style="left:92.47px;top:54.15px;font-size:14px;transform:scaleX(1.0152);color:#000;">6.12.2017</div>
<div class="t" style="left:179.00px;top:54.15px;font-size:14px;transform:scaleX(0.8351);color:#000;">EGE YEMEK SALONU</div>
<div class="t" style="left:368.70px;top:54.15px;font-size:14px;transform:scaleX(0.8331);color:#000;">GENEL</div>
<div class="t" style="left:541.97px;top:54.15px;font-size:14px;transform:scaleX(0.9659);color:#000;">16</div>
<div class="t" style="left:582.80px;top:54.15px;font-size:14px;transform:scaleX(0.9353);color:#000;">A0022</div>
<div class="t" style="left:676.60px;top:54.15px;font-size:14px;transform:scaleX(0.8396);color:#000;">ŞALGAM SUYU</div>
<div class="t" style="left:877.02px;top:54.15px;font-size:14px;transform:scaleX(0.9986);color:#000;">Adet</div>
<div class="t" style="left:947.97px;top:54.15px;font-size:14px;transform:scaleX(0.9659);color:#000;">48</div>
<div class="t" style="left:1045.26px;top:54.15px;font-size:14px;transform:scaleX(1.0013);color:#000;">0,92</div>
<div class="t" style="left:1144.23px;top:54.15px;font-size:14px;transform:scaleX(0.9934);color:#000;">44,06</div>
<div class="t" style="left:1235.30px;top:54.15px;font-size:14px;transform:scaleX(1.0013);color:#000;">1,10</div>
<div style="left:0px;top:75px;width:1300px;height:24px;background:#fff"></div>
<div class="t" style="left:12.70px;top:79.15px;font-size:14px;transform:scaleX(0.9636);color:#000;">201712</div>
<div class="t" style="left:92.47px;top:79.15px;font-size:14px;transform:scaleX(1.0152);color:#000;">6.12.2017</div>
<div class="t" style="left:179.00px;top:79.15px;font-size:14px;transform:scaleX(0.8351);color:#000;">EGE YEMEK SALONU</div>
<div class="t" style="left:368.70px;top:79.15px;font-size:14px;transform:scaleX(0.8331);color:#000;">GENEL</div>
<div class="t" style="left:541.97px;top:79.15px;font-size:14px;transform:scaleX(0.9659);color:#000;">16</div>
<div class="t" style="left:582.80px;top:79.15px;font-size:14px;transform:scaleX(0.9353);color:#000;">A0028</div>
<div class="t" style="left:676.60px;top:79.15px;font-size:14px;transform:scaleX(0.8395);color:#000;">FINDIK EZMESİ</div>
<div class="t" style="left:877.02px;top:79.15px;font-size:14px;transform:scaleX(0.9986);color:#000;">Adet</div>
<div class="t" style="left:944.20px;top:79.15px;font-size:14px;transform:scaleX(0.9659);color:#000;">100</div>
<div class="t" style="left:1045.26px;top:79.15px;font-size:14px;transform:scaleX(1.0013);color:#000;">0,30</div>
<div class="t" style="left:1144.23px;top:79.15px;font-size:14px;transform:scaleX(0.9934);color:#000;">30,24</div>
<div class="t" style="left:1235.30px;top:79.15px;font-size:14px;transform:scaleX(1.0013);color:#000;">0,35</div>
<div style="left:0px;top:100px;width:1300px;height:24px;background:#f0f0f0"></div>
<div class="t" style="left:12.70px;top:104.15px;font-size:14px;transform:scaleX(0.9636);color:#000;">201712</div>
<div class="t" style="left:92.47px;top:104.15px;font-size:14px;transform:scaleX(1.0152);color:#000;">6.12.2017</div>
<div class="t" style="left:179.00px;top:104.15px;font-size:14px;transform:scaleX(0.8351);color:#000;">EGE YEMEK SALONU</div>
<div class="t" style="left:368.70px;top:104.15px;font-size:14px;transform:scaleX(0.8331);color:#000;">GENEL</div>
<div class="t" style="left:541.97px;top:104.15px;font-size:14px;transform:scaleX(0.9659);color:#000;">16</div>
<div class="t" style="left:582.80px;top:104.15px;font-size:14px;transform:scaleX(0.9353);color:#000;">A0052</div>
<div class="t" style="left:676.60px;top:104.15px;font-size:14px;transform:scaleX(0.8513);color:#000;">AYRAN</div>
<div class="t" style="left:877.02px;top:104.15px;font-size:14px;transform:scaleX(0.9986);color:#000;">Adet</div>
<div class="t" style="left:944.20px;top:104.15px;font-size:14px;transform:scaleX(0.9659);color:#000;">516</div>
<div class="t" style="left:1045.26px;top:104.15px;font-size:14px;transform:scaleX(1.0013);color:#000;">0,41</div>
<div class="t" style="left:1136.66px;top:104.15px;font-size:14px;transform:scaleX(1.0129);color:#000;">211,77</div>
<div class="t" style="left:1235.30px;top:104.15px;font-size:14px;transform:scaleX(1.0013);color:#000;">0,50</div>
<div style="left:0px;top:125px;width:1300px;height:24px;background:#fff"></div>
<div class="t" style="left:12.70px;top:129.15px;font-size:14px;transform:scaleX(0.9636);color:#000;">201712</div>
<div class="t" style="left:92.47px;top:129.15px;font-size:14px;transform:scaleX(1.0152);color:#000;">6.12.2017</div>
<div class="t" style="left:179.00px;top:129.15px;font-size:14px;transform:scaleX(0.8351);color:#000;">EGE YEMEK SALONU</div>
<div class="t" style="left:368.70px;top:129.15px;font-size:14px;transform:scaleX(0.8331);color:#000;">GENEL</div>
<div class="t" style="left:541.97px;top:129.15px;font-size:14px;transform:scaleX(0.9659);color:#000;">16</div>
<div class="t" style="left:582.80px;top:129.15px;font-size:14px;transform:scaleX(0.9353);color:#000;">A0052</div>
<div class="t" style="left:676.60px;top:129.15px;font-size:14px;transform:scaleX(0.8513);color:#000;">AYRAN</div>
<div class="t" style="left:877.02px;top:129.15px;font-size:14px;transform:scaleX(0.9986);color:#000;">Adet</div>
<div class="t" style="left:947.97px;top:129.15px;font-size:14px;transform:scaleX(0.9659);color:#000;">84</div>
<div class="t" style="left:1045.26px;top:129.15px;font-size:14px;transform:scaleX(1.0013);color:#000;">0,41</div>
<div class="t" style="left:1144.23px;top:129.15px;font-size:14px;transform:scaleX(0.9934);color:#000;">34,47</div>
<div class="t" style="left:1235.30px;top:129.15px;font-size:14px;transform:scaleX(1.0013);color:#000;">0,50</div>
<div style="left:0px;top:150px;width:1300px;height:24px;background:#f0f0f0"></div>
<div class="t" style="left:12.70px;top:154.15px;font-size:14px;transform:scaleX(0.9636);color:#000;">201712</div>
<div class="t" style="left:92.47px;top:154.15px;font-size:14px;transform:scaleX(1.0152);color:#000;">6.12.2017</div>
<div class="t" style="left:179.00px;top:154.15px;font-size:14px;transform:scaleX(0.8351);color:#000;">EGE YEMEK SALONU</div>
<div class="t" style="left:368.70px;top:154.15px;font-size:14px;transform:scaleX(0.8331);color:#000;">GENEL</div>
<div class="t" style="left:541.97px;top:154.15px;font-size:14px;transform:scaleX(0.9659);color:#000;">16</div>
<div class="t" style="left:582.80px;top:154.15px;font-size:14px;transform:scaleX(0.9353);color:#000;">A0065</div>
<div class="t" style="left:676.60px;top:154.15px;font-size:14px;transform:scaleX(0.8651);color:#000;">PİKNİK REÇEL 20 GR</div>
<div class="t" style="left:877.02px;top:154.15px;font-size:14px;transform:scaleX(0.9986);color:#000;">Adet</div>
<div class="t" style="left:944.20px;top:154.15px;font-size:14px;transform:scaleX(0.9659);color:#000;">200</div>
<div class="t" style="left:1045.26px;top:154.15px;font-size:14px;transform:scaleX(1.0013);color:#000;">0,15</div>
<div class="t" style="left:1144.23px;top:154.15px;font-size:14px;transform:scaleX(0.9934);color:#000;">30,24</div>
<div class="t" style="left:1235.30px;top:154.15px;font-size:14px;transform:scaleX(1.0013);color:#000;">0,20</div>
<div style="left:0px;top:175px;width:1300px;height:24px;background:#fff"></div>
<div class="t" style="left:12.70px;top:179.15px;font-size:14px;transform:scaleX(0.9636);color:#000;">201712</div>
<div class="t" style="left:92.47px;top:179.15px;font-size:14px;transform:scaleX(1.0152);color:#000;">6.12.2017</div>
<div class="t" style="left:179.00px;top:179.15px;font-size:14px;transform:scaleX(0.8351);color:#000;">EGE YEMEK SALONU</div>
<div class="t" style="left:368.70px;top:179.15px;font-size:14px;transform:scaleX(0.8331);color:#000;">GENEL</div>
<div class="t" style="left:541.97px;top:179.15px;font-size:14px;transform:scaleX(0.9659);color:#000;">16</div>
<div class="t" style="left:582.80px;top:179.15px;font-size:14px;transform:scaleX(0.9353);color:#000;">A0072</div>
<div class="t" style="left:676.60px;top:179.15px;font-size:14px;transform:scaleX(0.8457);color:#000;">ROL EKMEĞİ</div>
<div class="t" style="left:877.02px;top:179.15px;font-size:14px;transform:scaleX(0.9986);color:#000;">Adet</div>
<div class="t" style="left:940.48px;top:179.15px;font-size:14px;transform:scaleX(0.9661);color:#000;">9000</div>
<div class="t" style="left:1045.26px;top:179.15px;font-size:14px;transform:scaleX(1.0013);color:#000;">0,20</div>
<div class="t" style="left:1124.44px;top:179.15px;font-size:14px;transform:scaleX(1.0011);color:#000;">1.818,00</div>
<div class="t" style="left:1235.30px;top:179.15px;font-size:14px;transform:scaleX(1.0013);color:#000;">0,25</div>
<div style="left:0px;top:200px;width:1300px;height:24px;background:#f0f0f0"></div>
<div class="t" style="left:12.70px;top:204.15px;font-size:14px;transform:scaleX(0.9636);color:#000;">201712</div>
<div class="t" style="left:92.47px;top:204.15px;font-size:14px;transform:scaleX(1.0152);color:#000;">6.12.2017</div>
<div class="t" style="left:179.00px;top:204.15px;font-size:14px;transform:scaleX(0.8351);color:#000;">EGE YEMEK SALONU</div>
<div class="t" style="left:368.70px;top:204.15px;font-size:14px;transform:scaleX(0.8331);color:#000;">GENEL</div>
<div class="t" style="left:541.97px;top:204.15px;font-size:14px;transform:scaleX(0.9659);color:#000;">16</div>
<div class="t" style="left:582.80px;top:204.15px;font-size:14px;transform:scaleX(0.9353);color:#000;">A0087</div>
<div class="t" style="left:676.60px;top:204.15px;font-size:14px;transform:scaleX(0.8666);color:#000;">TAHİN PEKMEZ 20 GR</div>
<div class="t" style="left:877.02px;top:204.15px;font-size:14px;transform:scaleX(0.9986);color:#000;">Adet</div>
<div class="t" style="left:944.20px;top:204.15px;font-size:14px;transform:scaleX(0.9659);color:#000;">100</div>
<div class="t" style="left:1045.26px;top:204.15px;font-size:14px;transform:scaleX(1.0013);color:#000;">0,30</div>
<div class="t" style="left:1144.23px;top:204.15px;font-size:14px;transform:scaleX(0.9934);color:#000;">30,24</div>
<div class="t" style="left:1235.30px;top:204.15px;font-size:14px;transform:scaleX(1.0013);color:#000;">0,35</div>
<div style="left:0px;top:225px;width:1300px;height:24px;background:#fff"></div>
<div class="t" style="left:12.70px;top:229.15px;font-size:14px;transform:scaleX(0.9636);color:#000;">201712</div>
<div class="t" style="left:92.47px;top:229.15px;font-size:14px;transform:scaleX(1.0152);color:#000;">6.12.2017</div>
<div class="t" style="left:179.00px;top:229.15px;font-size:14px;transform:scaleX(0.8351);color:#000;">EGE YEMEK SALONU</div>
<div class="t" style="left:368.70px;top:229.15px;font-size:14px;transform:scaleX(0.8331);color:#000;">GENEL</div>
<div class="t" style="left:541.97px;top:229.15px;font-size:14px;transform:scaleX(0.9659);color:#000;">16</div>
<div class="t" style="left:582.80px;top:229.15px;font-size:14px;transform:scaleX(0.9353);color:#000;">A0087</div>
<div class="t" style="left:676.60px;top:229.15px;font-size:14px;transform:scaleX(0.8666);color:#000;">TAHİN PEKMEZ 20 GR</div>
<div class="t" style="left:877.02px;top:229.15px;font-size:14px;transform:scaleX(0.9986);color:#000;">Adet</div>
<div class="t" style="left:944.20px;top:229.15px;font-size:14px;transform:scaleX(0.9659);color:#000;">100</div>
<div class="t" style="left:1045.26px;top:229.15px;font-size:14px;transform:scaleX(1.0013);color:#000;">0,30</div>
<div class="t" style="left:1144.23px;top:229.15px;font-size:14px;transform:scaleX(0.9934);color:#000;">30,24</div>
<div class="t" style="left:1235.30px;top:229.15px;font-size:14px;transform:scaleX(1.0013);color:#000;">0,35</div>
<div style="left:0px;top:250px;width:1300px;height:24px;background:#f0f0f0"></div>
<div class="t" style="left:12.70px;top:254.15px;font-size:14px;transform:scaleX(0.9636);color:#000;">201712</div>
<div class="t" style="left:92.47px;top:254.15px;font-size:14px;transform:scaleX(1.0152);color:#000;">6.12.2017</div>
<div class="t" style="left:179.00px;top:254.15px;font-size:14px;transform:scaleX(0.8351);color:#000;">EGE YEMEK SALONU</div>
<div class="t" style="left:368.70px;top:254.15px;font-size:14px;transform:scaleX(0.8331);color:#000;">GENEL</div>
<div class="t" style="left:541.97px;top:254.15px;font-size:14px;transform:scaleX(0.9659);color:#000;">16</div>
<div class="t" style="left:582.80px;top:254.15px;font-size:14px;transform:scaleX(0.9353);color:#000;">A0093</div>
<div class="t" style="left:676.60px;top:254.15px;font-size:14px;transform:scaleX(0.8401);color:#000;">KUTU İÇECEK</div>
<div class="t" style="left:877.02px;top:254.15px;font-size:14px;transform:scaleX(0.9986);color:#000;">Adet</div>
<div class="t" style="left:944.20px;top:254.15px;font-size:14px;transform:scaleX(0.9659);color:#000;">216</div>
<div class="t" style="left:1045.26px;top:254.15px;font-size:14px;transform:scaleX(1.0013);color:#000;">1,13</div>
<div class="t" style="left:1136.70px;top:254.15px;font-size:14px;transform:scaleX(0.9884);color:#000;">243,41</div>
<div class="t" style="left:1235.30px;top:254.15px;font-size:14px;transform:scaleX(1.0013);color:#000;">1,35</div>
<div style="left:0px;top:275px;width:1300px;height:24px;background:#fff"></div>
<div class="t" style="left:12.70px;top:279.15px;font-size:14px;transform:scaleX(0.9636);color:#000;">201712</div>
<div class="t" style="left:92.47px;top:279.15px;font-size:14px;transform:scaleX(1.0152);color:#000;">6.12.2017</div>
<div class="t" style="left:179.00px;top:279.15px;font-size:14px;transform:scaleX(0.8351);color:#000;">EGE YEMEK SALONU</div>
<div class="t" style="left:368.70px;top:279.15px;font-size:14px;transform:scaleX(0.8331);color:#000;">GENEL</div>
<div class="t" style="left:541.97px;top:279.15px;font-size:14px;transform:scaleX(0.9659);color:#000;">16</div>
<div class="t" style="left:582.80px;top:279.15px;font-size:14px;transform:scaleX(0.9353);color:#000;">A0094</div>
<div class="t" style="left:676.60px;top:279.15px;font-size:14px;transform:scaleX(0.8457);color:#000;">SODA MEYVELİ</div>
<div class="t" style="left:877.02px;top:279.15px;font-size:14px;transform:scaleX(0.9986);color:#000;">Adet</div>
<div class="t" style="left:947.97px;top:279.15px;font-size:14px;transform:scaleX(0.9659);color:#000;">96</div>
<div class="t" style="left:1045.26px;top:279.15px;font-size:14px;transform:scaleX(1.0013);color:#000;">0,53</div>
<div class="t" style="left:1144.23px;top:279.15px;font-size:14px;transform:scaleX(0.9934);color:#000;">50,80</div>
<div class="t" style="left:1235.30px;top:279.15px;font-size:14px;transform:scaleX(1.0013);color:#000;">0,65</div>
<div style="left:0px;top:300px;width:1300px;height:24px;background:#f0f0f0"></div>
<div class="t" style="left:12.70px;top:304.15px;font-size:14px;transform:scaleX(0.9636);color:#000;">201712</div>
<div class="t" style="left:92.47px;top:304.15px;font-size:14px;transform:scaleX(1.0152);color:#000;">6.12.2017</div>
<div class="t" style="left:179.00px;top:304.15px;font-size:14px;transform:scaleX(0.8351);color:#000;">EGE YEMEK SALONU</div>
<div class="t" style="left:368.70px;top:304.15px;font-size:14px;transform:scaleX(0.8331);color:#000;">GENEL</div>
<div class="t" style="left:541.97px;top:304.15px;font-size:14px;transform:scaleX(0.9659);color:#000;">16</div>
<div class="t" style="left:582.80px;top:304.15px;font-size:14px;transform:scaleX(0.9353);color:#000;">A0096</div>
<div class="t" style="left:676.60px;top:304.15px;font-size:14px;transform:scaleX(0.9314);color:#000;">SU 0.5</div>
<div class="t" style="left:877.02px;top:304.15px;font-size:14px;transform:scaleX(0.9986);color:#000;">Adet</div>
<div class="t" style="left:940.48px;top:304.15px;font-size:14px;transform:scaleX(0.9661);color:#000;">1320</div>
<div class="t" style="left:1045.26px;top:304.15px;font-size:14px;transform:scaleX(1.0013);color:#000;">0,28</div>
<div class="t" style="left:1136.70px;top:304.15px;font-size:14px;transform:scaleX(0.9884);color:#000;">369,59</div>
<div class="t" style="left:1235.30px;top:304.15px;font-size:14px;transform:scaleX(1.0013);color:#000;">0,35</div>
<div style="left:0px;top:325px;width:1300px;height:24px;background:#fff"></div>
<div class="t" style="left:12.70px;top:329.15px;font-size:14px;transform:scaleX(0.9636);color:#000;">201712</div>
<div class="t" style="left:92.47px;top:329.15px;font-size:14px;transform:scaleX(1.0152);color:#000;">6.12.2017</div>
<div class="t" style="left:179.00px;top:329.15px;font-size:14px;transform:scaleX(0.8351);color:#000;">EGE YEMEK SALONU</div>
<div class="t" style="left:368.70px;top:329.15px;font-size:14px;transform:scaleX(0.8331);color:#000;">GENEL</div>
<div class="t" style="left:541.97px;top:329.15px;font-size:14px;transform:scaleX(0.9659);color:#000;">16</div>
<div class="t" style="left:582.80px;top:329.15px;font-size:14px;transform:scaleX(0.9353);color:#000;">A0099</div>
<div class="t" style="left:676.60px;top:329.15px;font-size:14px;transform:scaleX(0.8330);color:#000;">SODA</div>
<div class="t" style="left:877.02px;top:329.15px;font-size:14px;transform:scaleX(0.9986);color:#000;">Adet</div>
<div class="t" style="left:947.97px;top:329.15px;font-size:14px;transform:scaleX(0.9659);color:#000;">58</div>
<div class="t" style="left:1045.26px;top:329.15px;font-size:14px;transform:scaleX(1.0013);color:#000;">0,42</div>
<div class="t" style="left:1144.23px;top:329.15px;font-size:14px;transform:scaleX(0.9934);color:#000;">24,43</div>
<div class="t" style="left:1235.30px;top:329.15px;font-size:14px;transform:scaleX(1.0013);color:#000;">0,50</div>
<div style="left:0px;top:350px;width:1300px;height:24px;background:#f0f0f0"></div>
<div class="t" style="left:12.70px;top:354.15px;font-size:14px;transform:scaleX(0.9636);color:#000;">201712</div>
<div class="t" style="left:92.47px;top:354.15px;font-size:14px;transform:scaleX(1.0152);color:#000;">6.12.2017</div>
<div class="t" style="left:179.00px;top:354.15px;font-size:14px;transform:scaleX(0.8351);color:#000;">EGE YEMEK SALONU</div>
<div class="t" style="left:368.70px;top:354.15px;font-size:14px;transform:scaleX(0.8331);color:#000;">GENEL</div>
<div class="t" style="left:541.97px;top:354.15px;font-size:14px;transform:scaleX(0.9659);color:#000;">16</div>
<div class="t" style="left:582.80px;top:354.15px;font-size:14px;transform:scaleX(0.9353);color:#000;">A0099</div>
<div class="t" style="left:676.60px;top:354.15px;font-size:14px;transform:scaleX(0.8330);color:#000;">SODA</div>
<div class="t" style="left:877.02px;top:354.15px;font-size:14px;transform:scaleX(0.9986);color:#000;">Adet</div>
<div class="t" style="left:947.97px;top:354.15px;font-size:14px;transform:scaleX(0.9659);color:#000;">62</div>
<div class="t" style="left:1045.26px;top:354.15px;font-size:14px;transform:scaleX(1.0013);color:#000;">0,42</div>
<div class="t" style="left:1144.20px;top:354.15px;font-size:14px;transform:scaleX(1.0236);color:#000;">26,11</div>
<div class="t" style="left:1235.30px;top:354.15px;font-size:14px;transform:scaleX(1.0013);color:#000;">0,50</div>
<div style="left:0px;top:375px;width:1300px;height:24px;background:#d0d0fa"></div>
<div class="t" style="left:12.70px;top:379.15px;font-size:14px;transform:scaleX(0.9636);color:#000;">201712</div>
<div class="t" style="left:92.47px;top:379.15px;font-size:14px;transform:scaleX(1.0152);color:#000;">6.12.2017</div>
<div class="t" style="left:179.00px;top:379.15px;font-size:14px;transform:scaleX(0.8351);color:#000;">EGE YEMEK SALONU</div>
<div class="t" style="left:368.70px;top:379.15px;font-size:14px;transform:scaleX(0.8331);color:#000;">GENEL</div>
<div class="t" style="left:541.97px;top:379.15px;font-size:14px;transform:scaleX(0.9659);color:#000;">16</div>
<div class="t" style="left:582.80px;top:379.15px;font-size:14px;transform:scaleX(0.9353);color:#000;">A0165</div>
<div class="t" style="left:676.60px;top:379.15px;font-size:14px;transform:scaleX(0.8679);color:#000;">TON BALIĞI 80 GR</div>
<div class="t" style="left:877.02px;top:379.15px;font-size:14px;transform:scaleX(0.9986);color:#000;">Adet</div>
<div class="t" style="left:951.73px;top:379.15px;font-size:14px;transform:scaleX(0.9659);color:#000;">3</div>
<div class="t" style="left:1045.26px;top:379.15px;font-size:14px;transform:scaleX(1.0013);color:#000;">2,43</div>
<div class="t" style="left:1151.76px;top:379.15px;font-size:14px;transform:scaleX(1.0013);color:#000;">7,29</div>
<div class="t" style="left:1235.30px;top:379.15px;font-size:14px;transform:scaleX(1.0013);color:#000;">2,90</div>
<div style="left:0px;top:400px;width:1300px;height:24px;background:#f0f0f0"></div>
<div class="t" style="left:12.70px;top:404.15px;font-size:14px;transform:scaleX(0.9636);color:#000;">201712</div>
<div class="t" style="left:92.47px;top:404.15px;font-size:14px;transform:scaleX(1.0152);color:#000;">6.12.2017</div>
<div class="t" style="left:179.00px;top:404.15px;font-size:14px;transform:scaleX(0.8351);color:#000;">EGE YEMEK SALONU</div>
<div class="t" style="left:368.70px;top:404.15px;font-size:14px;transform:scaleX(0.8331);color:#000;">GENEL</div>
<div class="t" style="left:541.97px;top:404.15px;font-size:14px;transform:scaleX(0.9659);color:#000;">16</div>
<div class="t" style="left:582.80px;top:404.15px;font-size:14px;transform:scaleX(0.9353);color:#000;">A0165</div>
<div class="t" style="left:676.60px;top:404.15px;font-size:14px;transform:scaleX(0.8679);color:#000;">TON BALIĞI 80 GR</div>
<div class="t" style="left:877.02px;top:404.15px;font-size:14px;transform:scaleX(0.9986);color:#000;">Adet</div>
<div class="t" style="left:947.97px;top:404.15px;font-size:14px;transform:scaleX(0.9659);color:#000;">45</div>
<div class="t" style="left:1045.26px;top:404.15px;font-size:14px;transform:scaleX(1.0013);color:#000;">2,43</div>
<div class="t" style="left:1136.70px;top:404.15px;font-size:14px;transform:scaleX(0.9884);color:#000;">109,35</div>
<div class="t" style="left:1235.30px;top:404.15px;font-size:14px;transform:scaleX(1.0013);color:#000;">2,90</div>
<div style="left:0px;top:425px;width:1300px;height:24px;background:#fff"></div>
<div class="t" style="left:12.70px;top:429.15px;font-size:14px;transform:scaleX(0.9636);color:#000;">201712</div>
<div class="t" style="left:92.47px;top:429.15px;font-size:14px;transform:scaleX(1.0152);color:#000;">6.12.2017</div>
<div class="t" style="left:179.00px;top:429.15px;font-size:14px;transform:scaleX(0.8351);color:#000;">EGE YEMEK SALONU</div>
<div class="t" style="left:368.70px;top:429.15px;font-size:14px;transform:scaleX(0.8331);color:#000;">GENEL</div>
<div class="t" style="left:541.97px;top:429.15px;font-size:14px;transform:scaleX(0.9659);color:#000;">16</div>
<div class="t" style="left:582.80px;top:429.15px;font-size:14px;transform:scaleX(0.9353);color:#000;">A0261</div>
<div class="t" style="left:676.60px;top:429.15px;font-size:14px;transform:scaleX(0.8692);color:#000;">YOĞURT KASE 150 GR</div>
<div class="t" style="left:877.02px;top:429.15px;font-size:14px;transform:scaleX(0.9986);color:#000;">Adet</div>
<div class="t" style="left:947.97px;top:429.15px;font-size:14px;transform:scaleX(0.9659);color:#000;">36</div>
<div class="t" style="left:1045.26px;top:429.15px;font-size:14px;transform:scaleX(1.0013);color:#000;">0,58</div>
<div class="t" style="left:1144.23px;top:429.15px;font-size:14px;transform:scaleX(0.9934);color:#000;">21,00</div>
<div class="t" style="left:1235.30px;top:429.15px;font-size:14px;transform:scaleX(1.0013);color:#000;">0,70</div>
<div style="left:0px;top:450px;width:1300px;height:24px;background:#f0f0f0"></div>
<div class="t" style="left:12.70px;top:454.15px;font-size:14px;transform:scaleX(0.9636);color:#000;">201712</div>
<div class="t" style="left:92.47px;top:454.15px;font-size:14px;transform:scaleX(1.0152);color:#000;">6.12.2017</div>
<div class="t" style="left:179.00px;top:454.15px;font-size:14px;transform:scaleX(0.8351);color:#000;">EGE YEMEK SALONU</div>
<div class="t" style="left:368.70px;top:454.15px;font-size:14px;transform:scaleX(0.8331);color:#000;">GENEL</div>
<div class="t" style="left:541.97px;top:454.15px;font-size:14px;transform:scaleX(0.9659);color:#000;">16</div>
<div class="t" style="left:582.80px;top:454.15px;font-size:14px;transform:scaleX(0.9353);color:#000;">A0261</div>
<div class="t" style="left:676.60px;top:454.15px;font-size:14px;transform:scaleX(0.8692);color:#000;">YOĞURT KASE 150 GR</div>
<div class="t" style="left:877.02px;top:454.15px;font-size:14px;transform:scaleX(0.9986);color:#000;">Adet</div>
<div class="t" style="left:944.20px;top:454.15px;font-size:14px;transform:scaleX(0.9659);color:#000;">360</div>
<div class="t" style="left:1045.26px;top:454.15px;font-size:14px;transform:scaleX(1.0013);color:#000;">0,58</div>
<div class="t" style="left:1136.70px;top:454.15px;font-size:14px;transform:scaleX(0.9884);color:#000;">209,95</div>
<div class="t" style="left:1235.30px;top:454.15px;font-size:14px;transform:scaleX(1.0013);color:#000;">0,70</div>
<div style="left:0px;top:475px;width:1300px;height:24px;background:#fff"></div>
<div class="t" style="left:12.70px;top:479.15px;font-size:14px;transform:scaleX(0.9636);color:#000;">201712</div>
<div class="t" style="left:92.47px;top:479.15px;font-size:14px;transform:scaleX(1.0152);color:#000;">6.12.2017</div>
<div class="t" style="left:179.00px;top:479.15px;font-size:14px;transform:scaleX(0.8351);color:#000;">EGE YEMEK SALONU</div>
<div class="t" style="left:368.70px;top:479.15px;font-size:14px;transform:scaleX(0.8331);color:#000;">GENEL</div>
<div class="t" style="left:541.97px;top:479.15px;font-size:14px;transform:scaleX(0.9659);color:#000;">16</div>
<div class="t" style="left:582.80px;top:479.15px;font-size:14px;transform:scaleX(0.9353);color:#000;">A0261</div>
<div class="t" style="left:676.60px;top:479.15px;font-size:14px;transform:scaleX(0.8692);color:#000;">YOĞURT KASE 150 GR</div>
<div class="t" style="left:877.02px;top:479.15px;font-size:14px;transform:scaleX(0.9986);color:#000;">Adet</div>
<div class="t" style="left:947.97px;top:479.15px;font-size:14px;transform:scaleX(0.9659);color:#000;">24</div>
<div class="t" style="left:1045.26px;top:479.15px;font-size:14px;transform:scaleX(1.0013);color:#000;">0,58</div>
<div class="t" style="left:1144.23px;top:479.15px;font-size:14px;transform:scaleX(0.9934);color:#000;">14,00</div>
<div class="t" style="left:1235.30px;top:479.15px;font-size:14px;transform:scaleX(1.0013);color:#000;">0,70</div>
<div style="left:0px;top:500px;width:1300px;height:24px;background:#f0f0f0"></div>
<div class="t" style="left:12.70px;top:504.15px;font-size:14px;transform:scaleX(0.9636);color:#000;">201712</div>
<div class="t" style="left:92.47px;top:504.15px;font-size:14px;transform:scaleX(1.0152);color:#000;">6.12.2017</div>
<div class="t" style="left:179.00px;top:504.15px;font-size:14px;transform:scaleX(0.8351);color:#000;">EGE YEMEK SALONU</div>
<div class="t" style="left:368.70px;top:504.15px;font-size:14px;transform:scaleX(0.8331);color:#000;">GENEL</div>
<div class="t" style="left:541.97px;top:504.15px;font-size:14px;transform:scaleX(0.9659);color:#000;">14</div>
<div class="t" style="left:582.80px;top:504.15px;font-size:14px;transform:scaleX(0.9316);color:#000;">G0030</div>
<div class="t" style="left:676.60px;top:504.15px;font-size:14px;transform:scaleX(0.8524);color:#000;">AMELİYAT ELDİVENİ</div>
<div class="t" style="left:873.25px;top:504.15px;font-size:14px;transform:scaleX(1.0141);color:#000;">Paket</div>
<div class="t" style="left:947.97px;top:504.15px;font-size:14px;transform:scaleX(0.9659);color:#000;">40</div>
<div class="t" style="left:1045.26px;top:504.15px;font-size:14px;transform:scaleX(1.0013);color:#000;">6,48</div>
<div class="t" style="left:1136.70px;top:504.15px;font-size:14px;transform:scaleX(0.9884);color:#000;">259,20</div>
<div class="t" style="left:1235.30px;top:504.15px;font-size:14px;transform:scaleX(1.0013);color:#000;">6,50</div>
<div style="left:0px;top:525px;width:1300px;height:24px;background:#fff"></div>
<div class="t" style="left:12.70px;top:529.15px;font-size:14px;transform:scaleX(0.9636);color:#000;">201712</div>
<div class="t" style="left:92.47px;top:529.15px;font-size:14px;transform:scaleX(1.0152);color:#000;">6.12.2017</div>
<div class="t" style="left:179.00px;top:529.15px;font-size:14px;transform:scaleX(0.8351);color:#000;">EGE YEMEK SALONU</div>
<div class="t" style="left:368.70px;top:529.15px;font-size:14px;transform:scaleX(0.8331);color:#000;">GENEL</div>
<div class="t" style="left:541.97px;top:529.15px;font-size:14px;transform:scaleX(0.9659);color:#000;">14</div>
<div class="t" style="left:582.80px;top:529.15px;font-size:14px;transform:scaleX(0.9316);color:#000;">G0045</div>
<div class="t" style="left:676.60px;top:529.15px;font-size:14px;transform:scaleX(0.8463);color:#000;">ÇÖP TORBASI JUMBO</div>
<div class="t" style="left:883.32px;top:529.15px;font-size:14px;transform:scaleX(0.9445);color:#000;">Kg</div>
<div class="t" style="left:944.20px;top:529.15px;font-size:14px;transform:scaleX(0.9659);color:#000;">100</div>
<div class="t" style="left:1045.26px;top:529.15px;font-size:14px;transform:scaleX(1.0013);color:#000;">3,30</div>
<div class="t" style="left:1136.70px;top:529.15px;font-size:14px;transform:scaleX(0.9884);color:#000;">330,40</div>
<div class="t" style="left:1235.30px;top:529.15px;font-size:14px;transform:scaleX(1.0013);color:#000;">3,50</div>
<div style="left:0px;top:550px;width:1300px;height:24px;background:#f0f0f0"></div>
<div class="t" style="left:12.70px;top:554.15px;font-size:14px;transform:scaleX(0.9636);color:#000;">201712</div>
<div class="t" style="left:92.47px;top:554.15px;font-size:14px;transform:scaleX(1.0152);color:#000;">6.12.2017</div>
<div class="t" style="left:179.00px;top:554.15px;font-size:14px;transform:scaleX(0.8351);color:#000;">EGE YEMEK SALONU</div>
<div class="t" style="left:368.70px;top:554.15px;font-size:14px;transform:scaleX(0.8331);color:#000;">GENEL</div>
<div class="t" style="left:541.97px;top:554.15px;font-size:14px;transform:scaleX(0.9659);color:#000;">14</div>
<div class="t" style="left:582.80px;top:554.15px;font-size:14px;transform:scaleX(0.9316);color:#000;">G0047</div>
<div class="t" style="left:676.60px;top:554.15px;font-size:14px;transform:scaleX(0.8330);color:#000;">KÜRDAN</div>
<div class="t" style="left:873.25px;top:554.15px;font-size:14px;transform:scaleX(1.0141);color:#000;">Paket</div>
<div class="t" style="left:947.97px;top:554.15px;font-size:14px;transform:scaleX(0.9659);color:#000;">50</div>
<div class="t" style="left:1045.26px;top:554.15px;font-size:14px;transform:scaleX(1.0013);color:#000;">3,48</div>
<div class="t" style="left:1136.70px;top:554.15px;font-size:14px;transform:scaleX(0.9884);color:#000;">174,05</div>
<div class="t" style="left:1235.30px;top:554.15px;font-size:14px;transform:scaleX(1.0013);color:#000;">3,50</div>
<div style="left:73px;top:24px;width:2px;height:549px;background:#d9d9d9"></div>
<div style="left:173px;top:24px;width:2px;height:549px;background:#d9d9d9"></div>
<div style="left:363px;top:24px;width:2px;height:549px;background:#d9d9d9"></div>
<div style="left:521px;top:24px;width:2px;height:549px;background:#d9d9d9"></div>
<div style="left:576px;top:24px;width:2px;height:549px;background:#d9d9d9"></div>
<div style="left:671px;top:24px;width:2px;height:549px;background:#d9d9d9"></div>
<div style="left:861px;top:24px;width:2px;height:549px;background:#d9d9d9"></div>
<div style="left:921px;top:24px;width:2px;height:549px;background:#d9d9d9"></div>
<div style="left:988px;top:24px;width:2px;height:549px;background:#d9d9d9"></div>
<div style="left:1076px;top:24px;width:2px;height:549px;background:#d9d9d9"></div>
<div style="left:1183px;top:24px;width:2px;height:549px;background:#d9d9d9"></div>
<div style="left:0px;top:49px;width:1300px;height:2px;background:#d9d9d9"></div>
<div style="left:0px;top:74px;width:1300px;height:2px;background:#d9d9d9"></div>
<div style="left:0px;top:99px;width:1300px;height:2px;background:#d9d9d9"></div>
<div style="left:0px;top:124px;width:1300px;height:2px;background:#d9d9d9"></div>
<div style="left:0px;top:149px;width:1300px;height:2px;background:#d9d9d9"></div>
<div style="left:0px;top:174px;width:1300px;height:2px;background:#d9d9d9"></div>
<div style="left:0px;top:199px;width:1300px;height:2px;background:#d9d9d9"></div>
<div style="left:0px;top:224px;width:1300px;height:2px;background:#d9d9d9"></div>
<div style="left:0px;top:249px;width:1300px;height:2px;background:#d9d9d9"></div>
<div style="left:0px;top:274px;width:1300px;height:2px;background:#d9d9d9"></div>
<div style="left:0px;top:299px;width:1300px;height:2px;background:#d9d9d9"></div>
<div style="left:0px;top:324px;width:1300px;height:2px;background:#d9d9d9"></div>
<div style="left:0px;top:349px;width:1300px;height:2px;background:#d9d9d9"></div>
<div style="left:0px;top:374px;width:1300px;height:2px;background:#d9d9d9"></div>
<div style="left:0px;top:399px;width:1300px;height:2px;background:#d9d9d9"></div>
<div style="left:0px;top:424px;width:1300px;height:2px;background:#d9d9d9"></div>
<div style="left:0px;top:449px;width:1300px;height:2px;background:#d9d9d9"></div>
<div style="left:0px;top:474px;width:1300px;height:2px;background:#d9d9d9"></div>
<div style="left:0px;top:499px;width:1300px;height:2px;background:#d9d9d9"></div>
<div style="left:0px;top:524px;width:1300px;height:2px;background:#d9d9d9"></div>
<div style="left:0px;top:549px;width:1300px;height:2px;background:#d9d9d9"></div>
<div style="left:1px;top:377px;width:1242px;height:1px;background:repeating-linear-gradient(90deg,#202020 0 1.5px,transparent 1.5px 2.5px)"></div>
<div style="left:1px;top:397px;width:1242px;height:1px;background:repeating-linear-gradient(90deg,#202020 0 1.5px,transparent 1.5px 2.5px)"></div>
</div>
<div style="left:1251px;top:208px;width:22px;height:573px;background:#f0f0f0"></div>
<div style="left:1253px;top:229px;width:18px;height:88px;background:#cdcdcd"></div>
<svg style="left:1251px;top:208px" width="22" height="22"><path d="M6.8 13.8 L10.8 9.2 L14.8 13.8" fill="none" stroke="#606060" stroke-width="2.6"/></svg>
<svg style="left:1251px;top:758px" width="22" height="22"><path d="M6.8 9.6 L10.8 14.2 L14.8 9.6" fill="none" stroke="#606060" stroke-width="2.6"/></svg>
<div style="left:8px;top:781px;width:1243px;height:21px;background:#f0f0f0"></div>
<div style="left:8px;top:781px;width:1243px;height:1px;background:#fff"></div>
<div style="left:29px;top:782px;width:598px;height:19px;background:#cdcdcd"></div>
<svg style="left:8px;top:781px" width="21" height="21"><path d="M12.8 6.2 L7.2 10.5 L12.8 14.8" fill="none" stroke="#606060" stroke-width="2.6"/></svg>
<svg style="left:1230px;top:781px" width="21" height="21"><path d="M8 6.2 L13 10.5 L8 14.8" fill="none" stroke="#606060" stroke-width="2.6"/></svg>
<div style="left:1251px;top:781px;width:22px;height:21px;background:#f0f0f0"></div>
<div style="left:5px;top:803px;width:1270px;height:1px;background:#f8f8f8"></div>
<div style="left:5px;top:804px;width:1270px;height:1px;background:#c0c0c0"></div>
<div style="left:5px;top:805px;width:1270px;height:1px;background:#fcfcfc"></div>
<div style="left:15px;top:835px;width:131px;height:23px;box-sizing:border-box;background:#acacac;border:1px solid #6e6e6e;border-width:1px 0 2px 1px"></div>
<div class="t b" style="left:17.00px;top:839.15px;font-size:14px;transform:scaleX(1.1818);color:#fafafa;">Ürün Sayısı</div>
<div style="left:146px;top:835px;width:109px;height:23px;box-sizing:border-box;background:#fff;border-style:solid;border-width:2px 1px 1px 1px;border-color:#6e6e6e #e0e0e0 #e0e0e0 #bdbdbd"></div>
<div class="t b" style="left:185.90px;top:840.45px;font-size:14px;transform:scaleX(1.2655);color:#000;">116</div>
<div style="left:325px;top:835px;width:151px;height:23px;box-sizing:border-box;background:#acacac;border:1px solid #6e6e6e;border-width:1px 0 2px 1px"></div>
<div class="t b" style="left:327.00px;top:839.15px;font-size:14px;transform:scaleX(1.2192);color:#fafafa;">Ürün Toplamları</div>
<div style="left:475px;top:815px;width:171px;height:21px;box-sizing:border-box;background:#acacac;border-style:solid;border-width:1px 1px 1px 1px;border-color:#6e6e6e #6e6e6e #6e6e6e #6e6e6e"></div>
<div class="t b" style="left:512.90px;top:818.15px;font-size:14px;transform:scaleX(1.2030);color:#fafafa;">Alış Toplam</div>
<div style="left:476px;top:836px;width:170px;height:22px;box-sizing:border-box;background:#fff;border-style:solid;border-width:2px 1px 1px 1px;border-color:#6e6e6e #e0e0e0 #e0e0e0 #bdbdbd"></div>
<div class="t b" style="left:563.49px;top:840.15px;font-size:14px;transform:scaleX(1.2602);color:#000;">25.134,82</div>
<div style="left:646px;top:815px;width:170px;height:21px;box-sizing:border-box;background:#acacac;border-style:solid;border-width:1px 1px 1px 1px;border-color:#6e6e6e #6e6e6e #6e6e6e #6e6e6e"></div>
<div class="t b" style="left:678.13px;top:818.15px;font-size:14px;transform:scaleX(1.2050);color:#fafafa;">Satış Toplam</div>
<div style="left:647px;top:836px;width:169px;height:22px;box-sizing:border-box;background:#fff;border-style:solid;border-width:2px 1px 1px 1px;border-color:#6e6e6e #e0e0e0 #e0e0e0 #bdbdbd"></div>
<div class="t b" style="left:732.99px;top:840.15px;font-size:14px;transform:scaleX(1.2602);color:#000;">27.445,36</div>
<div style="left:816px;top:815px;width:170px;height:21px;box-sizing:border-box;background:#acacac;border-style:solid;border-width:1px 1px 1px 1px;border-color:#6e6e6e #6e6e6e #6e6e6e #6e6e6e"></div>
<div class="t b" style="left:854.30px;top:818.15px;font-size:14px;transform:scaleX(1.2027);color:#fafafa;">Kar Toplam</div>
<div style="left:817px;top:836px;width:169px;height:22px;box-sizing:border-box;background:#fff;border-style:solid;border-width:2px 1px 1px 1px;border-color:#6e6e6e #e0e0e0 #e0e0e0 #bdbdbd"></div>
<div class="t b" style="left:913.25px;top:840.15px;font-size:14px;transform:scaleX(1.2560);color:#000;">2.310,54</div>
</body></html>
